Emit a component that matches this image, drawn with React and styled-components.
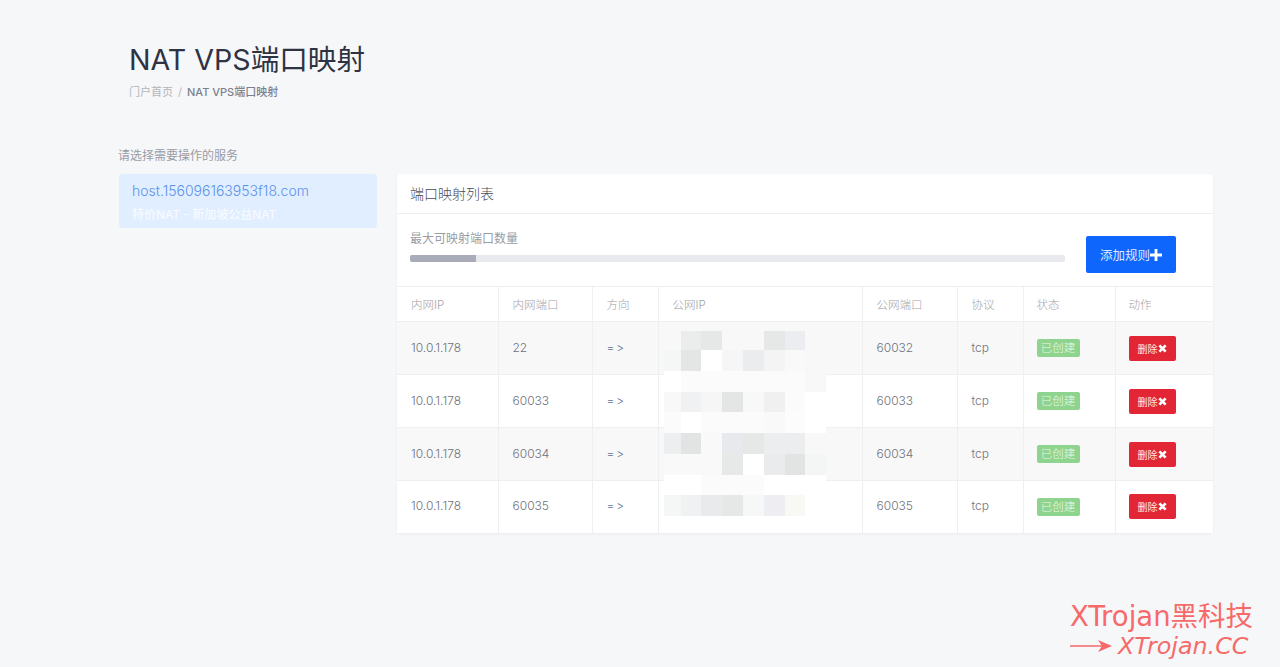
import React from "react";
import styled, { createGlobalStyle } from "styled-components";

const FONT = `Inter, "Noto Sans CJK SC", sans-serif`;

const GlobalStyle = createGlobalStyle`
	html, body {
		margin: 0;
		background: #f6f7f9;
		font-family: ${FONT};
	}
`;

const Page = styled.div`
	position: relative;
	height: 667px;
	box-sizing: border-box;
	padding: 41px 67px 0 119px;
	overflow: hidden;
`;

const Header = styled.header`
	padding-left: 10px;
	height: 105px;
`;

const Title = styled.h1`
	margin: 0;
	font-size: 28.6px;
	line-height: 38px;
	font-weight: 400;
	color: #2f3242;
`;

const Breadcrumb = styled.div`
	display: flex;
	gap: 5px;
	margin-top: 4px;
	font-size: 11px;
	line-height: 18px;
	color: #b3b5bc;
`;

const Current = styled.span`
	color: #7d808c;
	font-weight: 500;
`;

const Columns = styled.div`
	display: grid;
	grid-template-columns: 258px 816px;
	column-gap: 20px;
`;

const SideLabel = styled.div`
	margin-left: -1px;
	font-size: 12px;
	line-height: 20px;
	color: #9a9ca4;
	margin-bottom: 8px;
`;

const ServiceItem = styled.div`
	height: 54px;
	box-sizing: border-box;
	padding: 7px 13px;
	border-radius: 4px;
	background: #e1eeff;
`;

const ServiceHost = styled.div`
	font-size: 14px;
	line-height: 20px;
	font-weight: 300;
	color: #5b92ea;
`;

const ServiceName = styled.div`
	margin-top: 6px;
	font-size: 12px;
	line-height: 16px;
	color: #fbfcff;
`;

const Card = styled.section`
	position: relative;
	margin-top: 28px;
	background: #fff;
	border-radius: 4px;
	box-shadow: 0 1px 3px rgba(40, 50, 70, 0.06);
`;

const CardTitle = styled.div`
	height: 40px;
	box-sizing: border-box;
	padding: 0 13px;
	border-bottom: 1px solid #f0f0f2;
	font-size: 14px;
	font-weight: 300;
	line-height: 40px;
	color: #4a4d57;
`;

const QuotaRow = styled.div`
	display: flex;
	align-items: flex-start;
	height: 72px;
	box-sizing: border-box;
	padding: 16px 37px 0 13px;
	gap: 21px;
`;

const Quota = styled.div`
	flex: 1;
`;

const QuotaLabel = styled.div`
	font-size: 12px;
	line-height: 18px;
	color: #9a9ca4;
	margin-bottom: 7px;
`;

const Track = styled.div`
	height: 7px;
	border-radius: 2px;
	background: #e7e9ed;
	overflow: hidden;
`;

const Fill = styled.div`
	height: 100%;
	background: #a9abb9;
`;

const AddButton = styled.button`
	display: flex;
	align-items: center;
	justify-content: center;
	width: 90px;
	height: 37px;
	margin-top: 6px;
	padding: 0;
	border: 0;
	border-radius: 2px;
	background: #0f66fd;
	color: #dfe9ff;
	font: 400 12.5px ${FONT};
`;

const Table = styled.table`
	width: 816px;
	table-layout: fixed;
	border-collapse: collapse;
	font-size: 12px;
`;

const HeadCell = styled.th`
	height: 35px;
	box-sizing: border-box;
	padding: 0 0 1px ${(p) => (p.$tight ? "13px" : "14px")};
	text-align: left;
	font-size: 11.5px;
	font-weight: 300;
	color: #a3a4aa;
	border: 1px solid #eeeff1;
	border-left: ${(p) => (p.$first ? "0" : "1px solid #eeeff1")};
	border-right: ${(p) => (p.$last ? "0" : "1px solid #eeeff1")};
`;

const Row = styled.tr`
	background: ${(p) => (p.$striped ? "#f8f8f8" : "#fff")};
`;

const Cell = styled.td`
	height: ${(p) => (p.$bottom ? "52px" : "53px")};
	box-sizing: border-box;
	padding: 0 0 ${(p) => (p.$tight ? "0" : "2px")} ${(p) => (p.$tight ? "13px" : "14px")};
	color: #6f727d;
	font-weight: 300;
	font-variant-ligatures: none;
	font-feature-settings: "calt" 0, "liga" 0;
	border: 1px solid #eeeff1;
	border-left: ${(p) => (p.$first ? "0" : "1px solid #eeeff1")};
	border-right: ${(p) => (p.$last ? "0" : "1px solid #eeeff1")};
	border-bottom: ${(p) => (p.$bottom ? "0" : "1px solid #eeeff1")};
`;

const Direction = styled.span`
	letter-spacing: 2px;
	color: #5c6f93;
`;

const StatusBadge = styled.span`
	display: inline-block;
	width: 43px;
	height: 18px;
	border-radius: 2px;
	background: #8fd48e;
	color: #e9f8e6;
	font-size: 11.5px;
	line-height: 18px;
	text-align: center;
	vertical-align: middle;
`;

const DeleteButton = styled.button`
	display: flex;
	align-items: center;
	justify-content: center;
	width: 47px;
	height: 25px;
	padding: 0;
	border: 0;
	border-radius: 2px;
	background: #e32636;
	color: #fde6e8;
	font: 400 10px ${FONT};
`;

const Mosaic = styled.svg`
	position: absolute;
	left: 267px;
	top: 157px;
`;

const Watermark = styled.div`
	position: absolute;
	left: 1070px;
	top: 600px;
	width: 200px;
	color: #f66a6a;
	font-family: "DejaVu Sans", "Noto Sans CJK SC", sans-serif;
`;

const MarkTitle = styled.div`
	font-size: 27.5px;
	line-height: 33px;
	white-space: nowrap;
`;

const MarkLine = styled.div`
	display: flex;
	align-items: center;
	gap: 6px;
	font-size: 23.8px;
	line-height: 26px;
	font-style: italic;
	white-space: nowrap;
`;

const columnWidths = [101, 94, 66, 204, 95, 66, 92, 98];
const headings = ["内网IP", "内网端口", "方向", "公网IP", "公网端口", "协议", "状态", "动作"];
const rules = [
	{ local: "22", remote: "60032" },
	{ local: "60033", remote: "60033" },
	{ local: "60034", remote: "60034" },
	{ local: "60035", remote: "60035" },
];

/* blurred-out public IPs, one colour per block */
const mosaicX = [0, 17, 37, 58, 79, 100, 121, 141, 162];
const mosaicY = [0, 19, 40, 61, 81, 102, 123, 144, 164, 185];
const mosaicRows = [
	["#f8f8f8", "#ebecec", "#e6e8e8", "#f8f8f8", "#f8f8f8", "#e6e8e8", "#ecedf0", "#f8f8f8"],
	["#f5f7f7", "#e4e6e6", "#ffffff", "#f6f6f6", "#ebecee", "#f4f4f4", "#f9f9f9", "#f8f8f8"],
	["#ffffff", "#fbfbfb", "#fbfbfb", "#fbfbfb", "#fbfbfb", "#fbfbfb", "#fbfbfb", "#f8f8f8"],
	["#f8f8f8", "#f0f1f2", "#f6f6f6", "#e4e6e6", "#f8f8f8", "#f0f0f0", "#fbfbfb", "#ffffff"],
	["#fbfbfb", "#ffffff", "#fbfbfb", "#fbfbfb", "#fbfbfb", "#f9f9f9", "#fcfcfc", "#ffffff"],
	["#eceef0", "#e2e4e4", "#f9f9f9", "#e8e9ec", "#e6e8e8", "#ecedef", "#ecedee", "#f8f8f8"],
	["#f9f9f9", "#f9f9f9", "#f9f9f9", "#e7e9e9", "#ffffff", "#eaebed", "#e2e4e4", "#f4f6f6"],
	["#ffffff", "#ffffff", "#fbfbfb", "#fbfbfb", "#fbfbfb", "#ffffff", "#ffffff", "#ffffff"],
	["#f5f7f7", "#f0f1f3", "#e9eaec", "#e6e8e8", "#f6f7f7", "#eeeef2", "#f8f8f5", "#ffffff"],
];

function PlusIcon() {
	return (
		<svg width="12" height="12" viewBox="0 0 12 12">
			<path d="M4.6 0h2.8v4.6H12v2.8H7.4V12H4.6V7.4H0V4.6h4.6z" fill="#fff" />
		</svg>
	);
}

function CrossIcon() {
	return (
		<svg width="9" height="9" viewBox="0 0 10 10">
			<path d="M1.5 1.5l7 7M8.5 1.5l-7 7" stroke="#fff" strokeWidth="3" />
		</svg>
	);
}

function IpMosaic() {
	return (
		<Mosaic width="162" height="185" viewBox="0 0 162 185">
			{mosaicRows.map((colors, r) =>
				colors.map((color, c) => (
					<rect
						key={`${r}-${c}`}
						x={mosaicX[c]}
						y={mosaicY[r]}
						width={mosaicX[c + 1] - mosaicX[c]}
						height={mosaicY[r + 1] - mosaicY[r]}
						fill={color}
					/>
				))
			)}
		</Mosaic>
	);
}

export default function App() {
	return (
		<Page>
			<GlobalStyle />
			<Header>
				<Title>NAT VPS端口映射</Title>
				<Breadcrumb>
					<span>门户首页</span>
					<span>/</span>
					<Current>NAT VPS端口映射</Current>
				</Breadcrumb>
			</Header>
			<Columns>
				<aside>
					<SideLabel>请选择需要操作的服务</SideLabel>
					<ServiceItem>
						<ServiceHost>host.156096163953f18.com</ServiceHost>
						<ServiceName>特价NAT - 新加坡公益NAT</ServiceName>
					</ServiceItem>
				</aside>
				<Card>
					<CardTitle>端口映射列表</CardTitle>
					<QuotaRow>
						<Quota>
							<QuotaLabel>最大可映射端口数量</QuotaLabel>
							<Track>
								<Fill style={{ width: `${(66 / 655) * 100}%` }} />
							</Track>
						</Quota>
						<AddButton>
							添加规则
							<PlusIcon />
						</AddButton>
					</QuotaRow>
					<Table>
						<colgroup>
							{columnWidths.map((w, i) => (
								<col key={i} width={w} />
							))}
						</colgroup>
						<thead>
							<tr>
								{headings.map((h, i) => (
									<HeadCell
										key={h}
										$first={i === 0}
										$last={i === headings.length - 1}
										$tight={i >= 6}
									>
										{h}
									</HeadCell>
								))}
							</tr>
						</thead>
						<tbody>
							{rules.map((rule, i) => {
								const bottom = i === rules.length - 1;
								return (
									<Row key={rule.remote} $striped={i % 2 === 0}>
										<Cell $first $bottom={bottom}>10.0.1.178</Cell>
										<Cell $bottom={bottom}>{rule.local}</Cell>
										<Cell $bottom={bottom}>
											<Direction>=&gt;</Direction>
										</Cell>
										<Cell $bottom={bottom} />
										<Cell $bottom={bottom}>{rule.remote}</Cell>
										<Cell $bottom={bottom}>tcp</Cell>
										<Cell $tight $bottom={bottom}>
											<StatusBadge>已创建</StatusBadge>
										</Cell>
										<Cell $tight $last $bottom={bottom}>
											<DeleteButton>
												删除
												<CrossIcon />
											</DeleteButton>
										</Cell>
									</Row>
								);
							})}
						</tbody>
					</Table>
					<IpMosaic />
				</Card>
			</Columns>
			<Watermark>
				<MarkTitle>XTrojan黑科技</MarkTitle>
				<MarkLine>
					<svg width="42" height="14" viewBox="0 0 42 14">
						<path d="M0 6.2h36v1.6H0zM28 1l14 6-14 6 4-6z" fill="#f66a6a" />
					</svg>
					XTrojan.CC
				</MarkLine>
			</Watermark>
		</Page>
	);
}
